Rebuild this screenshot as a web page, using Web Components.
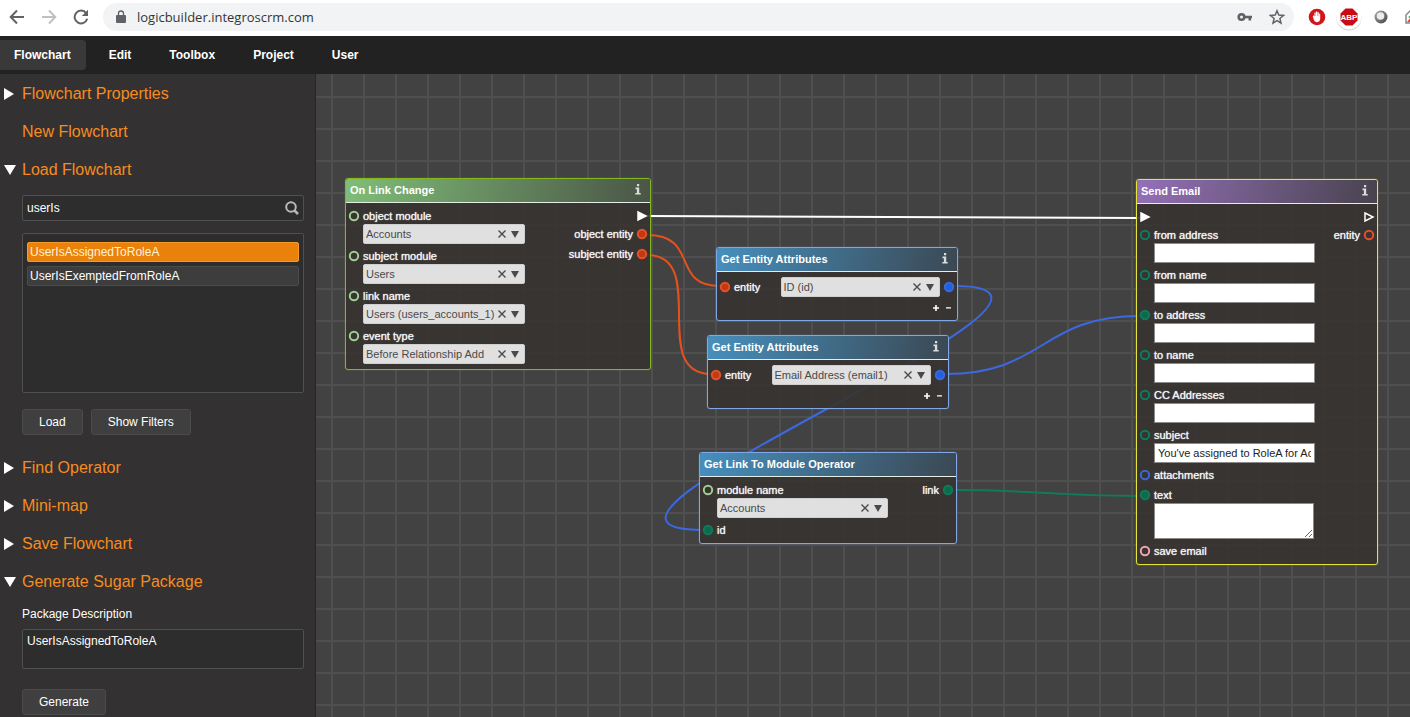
<!DOCTYPE html>
<html lang="en">
<head>
<meta charset="utf-8">
<title>Logic Builder</title>
<style>
  html, body { height: 100%; margin: 0; }
  body { font-family: "Liberation Sans", Arial, sans-serif; font-size: 12px; color: #fff; background: #424242; overflow: hidden; }
</style>
</head>
<body>
<logic-app></logic-app>

<script>
const define = (name, html, setup) => {
  const template = document.createElement('template');
  template.innerHTML = html;
  customElements.define(name, class extends HTMLElement {
    constructor() {
      super();
      this.attachShadow({ mode: 'open' }).append(template.content.cloneNode(true));
    }
    connectedCallback() {
      if (setup && !this.ready) { this.ready = true; setup(this, this.shadowRoot); }
    }
  });
};

/* Browser toolbar */
define('browser-bar', `
<style>
  :host { display: flex; align-items: center; height: 36px; flex: none; background: #fff; color: #5f6368; overflow: hidden; }
  button { width: 32px; height: 32px; padding: 0; border: 0; background: none; color: inherit; display: flex; align-items: center; justify-content: center; flex: none; }
  svg { display: block; flex: none; }
  nav { display: flex; padding: 0 6px 0 1px; }
  .fwd { color: #bdc1c6; }
  .pill { flex: 1; min-width: 0; display: flex; align-items: center; height: 28px; border-radius: 14px; background: #f1f3f4; padding: 0 1px 0 12px; margin-bottom: 2px; }
  input { flex: 1; min-width: 0; border: 0; background: none; padding: 0 10px; font: 13px "Open Sans", sans-serif; color: #333639; outline: 0; }
  .ext { display: flex; flex: 0 0 109px; margin-left: 7px; overflow: hidden; }
  .ext, nav { margin-bottom: 2px; }
</style>
<nav>
  <button aria-label="Back"><svg width="16" height="16" viewBox="0 0 16 16" fill="none" stroke="currentColor" stroke-width="2"><path d="M15 8H2M8 1.500L1.700 8L8 14.500"/></svg></button>
  <button class="fwd" aria-label="Forward"><svg width="16" height="16" viewBox="0 0 16 16" fill="none" stroke="currentColor" stroke-width="2"><path d="M1 8h13M8 1.500L14.300 8L8 14.500"/></svg></button>
  <button aria-label="Reload"><svg width="16" height="16" viewBox="0 0 16 16"><path d="M13.200 4.200A6.400 6.400 0 1 0 14.200 9.800" fill="none" stroke="currentColor" stroke-width="2"/><path d="M15 0.800V7H8.800Z" fill="currentColor"/></svg></button>
</nav>
<div class="pill">
  <svg width="12" height="14" viewBox="0 0 12 14"><path d="M2 5h8a1 1 0 0 1 1 1v6a1 1 0 0 1-1 1H2a1 1 0 0 1-1-1V6a1 1 0 0 1 1-1z" fill="#5f6368"/><path d="M3.500 6V3.500a2.500 2.500 0 0 1 5 0V6" fill="none" stroke="#5f6368" stroke-width="1.300"/></svg>
  <input aria-label="Address" value="logicbuilder.integroscrm.com">
  <button aria-label="Passwords"><svg width="16" height="10" viewBox="0 0 16 10" fill="none" stroke="currentColor"><circle cx="4.500" cy="5" r="2.800" stroke-width="2.600"/><path d="M8 5h7M12.800 5v3.500" stroke-width="2.600"/></svg></button>
  <button aria-label="Bookmark"><svg width="16" height="16" viewBox="0 0 16 16" fill="none" stroke="currentColor" stroke-width="1.500"><path d="M8 1.800l1.800 4.300 4.700.4-3.600 3 1.100 4.600L8 11.600l-4 2.500 1.100-4.600-3.600-3 4.700-.4z"/></svg></button>
</div>
<div class="ext">
  <button aria-label="Ad blocker"><svg width="18" height="18" viewBox="0 0 18 18"><circle cx="9" cy="9" r="8.300" fill="#d2141b"/><path d="M4.800 8.300c-.2-1 1.100-1.200 1.400-.2l.3 1V4.900c0-.9 1.200-.9 1.200 0V8h.3V4c0-.9 1.300-.9 1.300 0v4h.3V4.700c0-.9 1.200-.9 1.200 0V8.400h.3V6c0-.8 1.100-.8 1.100 0v4.600c0 2.200-1.200 3.600-3.100 3.600-1.700 0-2.700-.8-3.300-2.400z" fill="#fff"/></svg></button>
  <button aria-label="Adblock Plus"><svg width="28" height="28" viewBox="0 0 28 28"><circle cx="14" cy="15" r="12.500" fill="#d0d0d0"/><circle cx="14" cy="14" r="12.500" fill="#fff"/><path d="M10.500 5.500h7l5 5v7l-5 5h-7l-5-5v-7z" fill="#c70d12"/><text x="14" y="17" text-anchor="middle" font-family="Liberation Sans, Arial, sans-serif" font-size="8" font-weight="700" fill="#fff">ABP</text></svg></button>
  <button aria-label="Extension"><svg width="14" height="14" viewBox="0 0 14 14"><defs><linearGradient id="g" x1="0" y1="0" x2="1" y2="1"><stop offset="0" stop-color="#aaa"/><stop offset="1" stop-color="#444"/></linearGradient></defs><circle cx="7" cy="7" r="6.500" fill="url(#g)"/><circle cx="6.500" cy="6" r="3.800" fill="#e9edf0"/></svg></button>
  <button aria-label="Extension"><svg width="16" height="14" viewBox="0 0 16 14"><path d="M1 13V5l4-4h10v12z" fill="#fff" stroke="#888" stroke-width="1.500"/><path d="M2 12l4-5v5z" fill="#e04a2b"/><path d="M3 7l4-2v4z" fill="#3c9b46"/></svg></button>
</div>`);

/* Main menu */
define('menu-bar', `
<style>
  :host { display: block; flex: none; background: #222; }
  nav { display: flex; gap: 10px; height: 30px; padding: 4px 0; }
</style>
<nav><slot></slot></nav>`);

define('menu-tab', `
<style>
  :host { display: block; }
  a { display: block; padding: 0 14px; font-weight: 700; font-size: 12px; line-height: 30px; color: #fff; text-decoration: none; border-radius: 4px; }
  :host([active]) a { background: #393939; padding-right: 15px; margin-right: -1px; border-radius: 0 4px 4px 0; }
</style>
<a href="#"><slot></slot></a>`);

/* Sidebar */
define('side-section', `
<style>
  :host { display: block; }
  button { display: flex; align-items: center; width: 100%; height: 38px; padding: 2px 0 0 4px; border: 0; background: none; font: inherit; font-size: 16px; color: #f68c1f; text-align: left; }
  svg { flex: 0 0 12px; height: 12px; margin-right: 6px; fill: #fff; }
  .body { padding: 0 11px 0 22px; }
</style>
<button><svg viewBox="0 0 12 12"><path/></svg><span></span></button>
<div class="body"><slot></slot></div>`, (el, root) => {
  root.querySelector('span').textContent = el.getAttribute('heading');
  const state = el.getAttribute('state');
  root.querySelector('path').setAttribute('d', state === 'open' ? 'M0 1H12L6 11Z' : state === 'closed' ? 'M0 0L10 6L0 12Z' : '');
});

define('dark-button', `
<style>
  :host { display: block; }
  button { height: 26px; padding: 0 16px; font: inherit; font-size: 12px; color: #fff; background: #3f3f3f; border: 1px solid #4b4b4b; border-radius: 3px; }
</style>
<button><slot></slot></button>`);

define('search-box', `
<style>
  :host { display: flex; align-items: center; height: 24px; margin-top: 7px; border: 1px solid #505050; border-radius: 2px; background: #2d2d2d; }
  input { flex: 1; min-width: 0; padding: 0 4px; border: 0; outline: 0; background: none; font: inherit; font-size: 12px; color: #fff; }
  button { padding: 0 4px; border: 0; background: none; }
  svg { display: block; }
</style>
<input aria-label="Search flowcharts" value="userIs">
<button aria-label="Search"><svg width="14" height="14" viewBox="0 0 14 14" fill="none" stroke="#b8b8b8"><circle cx="6" cy="6" r="4.800" stroke-width="2"/><path d="M9.300 9.300L13 13" stroke-width="2.600"/></svg></button>`);

define('flow-list', `
<style>
  :host { display: block; box-sizing: border-box; height: 160px; margin: 12px 0 16px; padding: 8px 4px; border: 1px solid #505050; border-radius: 2px; background: #2d2d2d; }
  ul { display: grid; gap: 4px; margin: 0; padding: 0; list-style: none; }
  button { display: block; width: 100%; height: 20px; padding: 0 2px; border: 1px solid #4b4b4b; border-radius: 2px; background: #3d3d3d; font: inherit; font-size: 12px; line-height: 18px; color: #fff; text-align: left; }
  .on { background: #ea810a; border-color: #f59a2c; color: #fff3d8; }
</style>
<ul>
  <li><button class="on">UserIsAssignedToRoleA</button></li>
  <li><button>UserIsExemptedFromRoleA</button></li>
</ul>`);

define('package-form', `
<style>
  :host { display: block; padding-top: 7px; }
  label, textarea { display: block; font-size: 12px; line-height: 14px; }
  textarea { box-sizing: border-box; width: 100%; height: 40px; margin: 8px 0 20px; padding: 4px; border: 1px solid #505050; border-radius: 2px; background: #2d2d2d; color: #fff; font-family: inherit; resize: none; outline: 0; }
</style>
<label for="d">Package Description</label>
<textarea id="d">UserIsAssignedToRoleA</textarea>
<dark-button>Generate</dark-button>`);

define('side-bar', `
<style>
  :host { display: block; box-sizing: border-box; flex: 0 0 316px; background: #333132; border-right: 1px solid #262626; overflow: hidden; }
  .row { display: flex; gap: 8px; padding-bottom: 13px; }
</style>
<side-section heading="Flowchart Properties" state="closed"></side-section>
<side-section heading="New Flowchart"></side-section>
<side-section heading="Load Flowchart" state="open">
  <search-box></search-box>
  <flow-list></flow-list>
  <div class="row"><dark-button>Load</dark-button><dark-button>Show Filters</dark-button></div>
</side-section>
<side-section heading="Find Operator" state="closed"></side-section>
<side-section heading="Mini-map" state="closed"></side-section>
<side-section heading="Save Flowchart" state="closed"></side-section>
<side-section heading="Generate Sugar Package" state="open"><package-form></package-form></side-section>`);

/* Connection points: "kind" selects the hue, "linked" fills the ring */
define('flow-port', `
<style>
  :host { display: block; flex: none; width: 10px; height: 10px; --ring: #0f7a5c; --fill: transparent; }
  :host([linked]) { --fill: #0c6b4b; }
  :host([kind=module]) { --ring: #9fce90; }
  :host([kind=entity]) { --ring: #e5502c; }
  :host([kind=entity][linked]) { --fill: #c23a10; }
  :host([kind=value]) { --ring: #3a68d8; }
  :host([kind=value][linked]) { --fill: #1f62e0; }
  :host([kind=flag]) { --ring: #f2a3b0; }
  svg { display: block; overflow: visible; }
  circle { fill: var(--fill); stroke: var(--ring); stroke-width: 2; }
  path { display: none; stroke: #fff; stroke-width: 1.500; fill: none; }
  :host([kind=exec]) circle { display: none; }
  :host([kind=exec]) path { display: block; }
  :host([kind=exec][linked]) path { fill: #fff; }
</style>
<svg width="10" height="10" viewBox="0 0 10 10"><circle cx="5" cy="5" r="4.200"/><path d="M1 1L9 5L1 9Z"/></svg>`);

define('pick-list', `
<style>
  :host { display: flex; align-items: center; box-sizing: border-box; height: 20px; padding-right: 2px; border: 1px solid #cfcfcf; border-radius: 2px; background: #e0e0e0; color: #4a4a4a; }
  select { flex: 1; min-width: 0; height: 18px; padding: 0 0 0 2px; border: 0; outline: 0; appearance: none; background: none; font: inherit; font-size: 11px; color: inherit; }
  button { flex: none; width: 12px; height: 18px; padding: 0; border: 0; background: none; color: inherit; display: flex; align-items: center; justify-content: center; }
  .open { width: 14px; pointer-events: none; }
</style>
<select><option></option></select>
<button aria-label="Clear"><svg width="8" height="8" viewBox="0 0 8 8" fill="none" stroke="currentColor" stroke-width="1.400"><path d="M.5 .5L7.500 7.500M7.500 .5L.5 7.500"/></svg></button>
<button class="open" aria-label="Open"><svg width="8" height="7" viewBox="0 0 8 7" fill="currentColor"><path d="M0 0H8L4 7Z"/></svg></button>`, (el, root) => {
  root.querySelector('option').textContent = el.getAttribute('value');
  root.querySelector('select').setAttribute('aria-label', el.getAttribute('name'));
});

/* One labelled input or output of a node */
define('flow-field', `
<style>
  :host { display: block; font-size: 11px; color: #f4f4f4; }
  .head { display: flex; align-items: center; gap: 4px; height: 16px; text-shadow: 0 0 1px #fff; white-space: nowrap; }
  :host([out]) .head { flex-direction: row-reverse; }
  :host([kind=exec]) { height: 14px; }
  .control { display: block; box-sizing: border-box; width: 161px; margin-left: 14px; height: 20px; padding: 0 3px; border: 1px solid #8a8a8a; background: #fff; font: inherit; color: #222; outline: 0; }
  textarea.control { width: 160px; height: 36px; resize: both; }
  pick-list { width: 162px; margin-left: 14px; }
  :host([wide]) pick-list { width: 171px; }
</style>
<div class="head"><flow-port></flow-port><label></label></div>`, (el, root) => {
  const port = root.querySelector('flow-port'), label = root.querySelector('label');
  for (const name of ['kind', 'linked'])
    if (el.hasAttribute(name)) port.setAttribute(name, el.getAttribute(name));
  label.textContent = el.getAttribute('label') || '';
  const type = el.getAttribute('type');
  if (!type) return;
  const control = document.createElement(type === 'pick' ? 'pick-list' : type === 'area' ? 'textarea' : 'input');
  const value = el.getAttribute('value') || '';
  if (type === 'pick') {
    control.setAttribute('name', label.textContent);
    control.setAttribute('value', value);
  } else {
    control.className = 'control';
    control.id = 'c';
    label.htmlFor = 'c';
    control.value = value;
  }
  root.append(control);
});

/* Node frame: slotted inputs on the left, outputs (slot="out") on the right */
define('flow-node', `
<style>
  :host { display: block; position: absolute; box-sizing: border-box; border: 1px solid var(--edge); border-radius: 3px; background: rgba(54, 51, 49, .9); box-shadow: 0 0 1px var(--edge); overflow: hidden; }
  :host([theme=event]) { --edge: #82b81e; --hue: #80bd78; --end: #4a5546; }
  :host([theme=data]) { --edge: #7fa6e6; --hue: #468fbd; --end: #3b4853; }
  :host([theme=mail]) { --edge: #e6e23c; --hue: #9470b8; --end: #48434e; }
  header { display: flex; align-items: center; justify-content: space-between; box-sizing: border-box; height: 24px; padding: 0 9px 2px 4px; border-bottom: 1px solid #e3eee6; background: linear-gradient(100deg, var(--hue), var(--end)); }
  h2 { margin: 0; font-size: 11px; font-weight: 700; white-space: nowrap; }
  button { padding: 0; border: 0; background: none; }
  :host([plain]) button { display: none; }
  svg { display: block; }
  .body { display: flex; justify-content: space-between; padding: 5px 3px; }
  .in, .out { display: grid; gap: 4px; align-content: start; }
</style>
<header><h2></h2><button aria-label="Info"><svg width="6" height="11" viewBox="0 0 6 11" fill="#dcdcdc"><path d="M2 0H4.200V2.200H2ZM.5 3.600H4.200V9H5.700V10.600H.3V9H1.900V5.200H.5Z"/></svg></button></header>
<div class="body"><div class="in"><slot></slot></div><div class="out"><slot name="out"></slot></div></div>`, (el, root) => {
  root.querySelector('h2').textContent = el.getAttribute('heading');
});

define('attribute-row', `
<style>
  :host { display: block; width: 234px; }
  .line, .tools { display: flex; align-items: center; }
  .line { height: 20px; justify-content: space-between; }
  flow-field { width: 57px; }
  pick-list { width: 159px; margin: 0 1px 0 0; }
  .tools { justify-content: flex-end; gap: 2px; height: 14px; margin-top: 4px; padding-right: 1px; }
  .tools button { width: 10px; padding: 0; border: 0; background: none; display: flex; justify-content: center; }
</style>
<div class="line"><flow-field label="entity" kind="entity" linked></flow-field><pick-list name="attribute"></pick-list><flow-port kind="value" linked></flow-port></div>
<div class="tools">
  <button aria-label="Add"><svg width="6" height="6" viewBox="0 0 6 6" fill="#fff"><path d="M2.200 0H3.800V2.200H6V3.800H3.800V6H2.200V3.800H0V2.200H2.200Z"/></svg></button>
  <button aria-label="Remove"><svg width="6" height="6" viewBox="0 0 6 6" fill="#fff"><path d="M1 2.200H6V3.600H1Z"/></svg></button>
</div>`, (el, root) => {
  const old = root.querySelector('pick-list'), list = document.createElement('pick-list');
  list.setAttribute('name', 'attribute');
  list.setAttribute('value', el.getAttribute('value'));
  old.replaceWith(list);
});

/* Free canvas with a 32px grid */
define('flow-canvas', `
<style>
  :host { display: block; flex: 1; min-width: 0; position: relative; overflow: hidden; background-color: #424242;
    background-image: linear-gradient(#4f4f4f 2px, transparent 2px), linear-gradient(90deg, #4f4f4f 2px, transparent 2px);
    background-size: 32px 32px; background-position: 15px 22px; }
  .wires { position: absolute; left: 0; top: 0; width: 100%; height: 100%; fill: none; stroke-width: 2; }
  #change { left: 29px; top: 104px; width: 306px; }
  #attr1 { left: 400px; top: 173px; width: 242px; }
  #attr2 { left: 391px; top: 261px; width: 242px; }
  #link { left: 383px; top: 378px; width: 258px; }
  #mail { left: 820px; top: 105px; width: 242px; }
</style>
<svg class="wires">
  <path stroke="#fff" d="M330 142L826 144"/>
  <g stroke="#e5501f"><path d="M331 161C384 161 354 212 404 212"/><path d="M331 181C394 181 332 300 395 300"/></g>
  <g stroke="#3c68e0"><path d="M638 212C833 212 192 456 387 456"/><path d="M629 300C729 300 724 242 824 242"/></g>
  <path stroke="#0f7a5c" d="M637 416C729 416 732 422 824 422"/>
</svg>
<flow-node id="change" theme="event" heading="On Link Change">
  <flow-field label="object module" kind="module" type="pick" value="Accounts"></flow-field>
  <flow-field label="subject module" kind="module" type="pick" value="Users"></flow-field>
  <flow-field label="link name" kind="module" type="pick" value="Users (users_accounts_1)"></flow-field>
  <flow-field label="event type" kind="module" type="pick" value="Before Relationship Add"></flow-field>
  <flow-field slot="out" out kind="exec" linked></flow-field>
  <flow-field slot="out" out label="object entity" kind="entity" linked></flow-field>
  <flow-field slot="out" out label="subject entity" kind="entity" linked></flow-field>
</flow-node>
<flow-node id="attr1" theme="data" heading="Get Entity Attributes"><attribute-row value="ID (id)"></attribute-row></flow-node>
<flow-node id="attr2" theme="data" heading="Get Entity Attributes"><attribute-row value="Email Address (email1)"></attribute-row></flow-node>
<flow-node id="link" theme="data" plain heading="Get Link To Module Operator">
  <flow-field label="module name" kind="module" type="pick" wide value="Accounts"></flow-field>
  <flow-field label="id" linked></flow-field>
  <flow-field slot="out" out label="link" linked></flow-field>
</flow-node>
<flow-node id="mail" theme="mail" heading="Send Email">
  <flow-field kind="exec" linked></flow-field>
  <flow-field label="from address" type="text"></flow-field>
  <flow-field label="from name" type="text"></flow-field>
  <flow-field label="to address" type="text" linked></flow-field>
  <flow-field label="to name" type="text"></flow-field>
  <flow-field label="CC Addresses" type="text"></flow-field>
  <flow-field label="subject" type="text" value="You've assigned to RoleA for Accounts"></flow-field>
  <flow-field label="attachments" kind="value"></flow-field>
  <flow-field label="text" type="area" linked></flow-field>
  <flow-field label="save email" kind="flag"></flow-field>
  <flow-field slot="out" out kind="exec"></flow-field>
  <flow-field slot="out" out label="entity" kind="entity"></flow-field>
</flow-node>`);

define('logic-app', `
<style>
  :host { display: flex; flex-direction: column; height: 100vh; }
  main { display: flex; flex: 1; min-height: 0; }
</style>
<browser-bar></browser-bar>
<menu-bar>
  <menu-tab active>Flowchart</menu-tab><menu-tab>Edit</menu-tab><menu-tab>Toolbox</menu-tab><menu-tab>Project</menu-tab><menu-tab>User</menu-tab>
</menu-bar>
<main><side-bar></side-bar><flow-canvas></flow-canvas></main>`);
</script>
</body>
</html>
